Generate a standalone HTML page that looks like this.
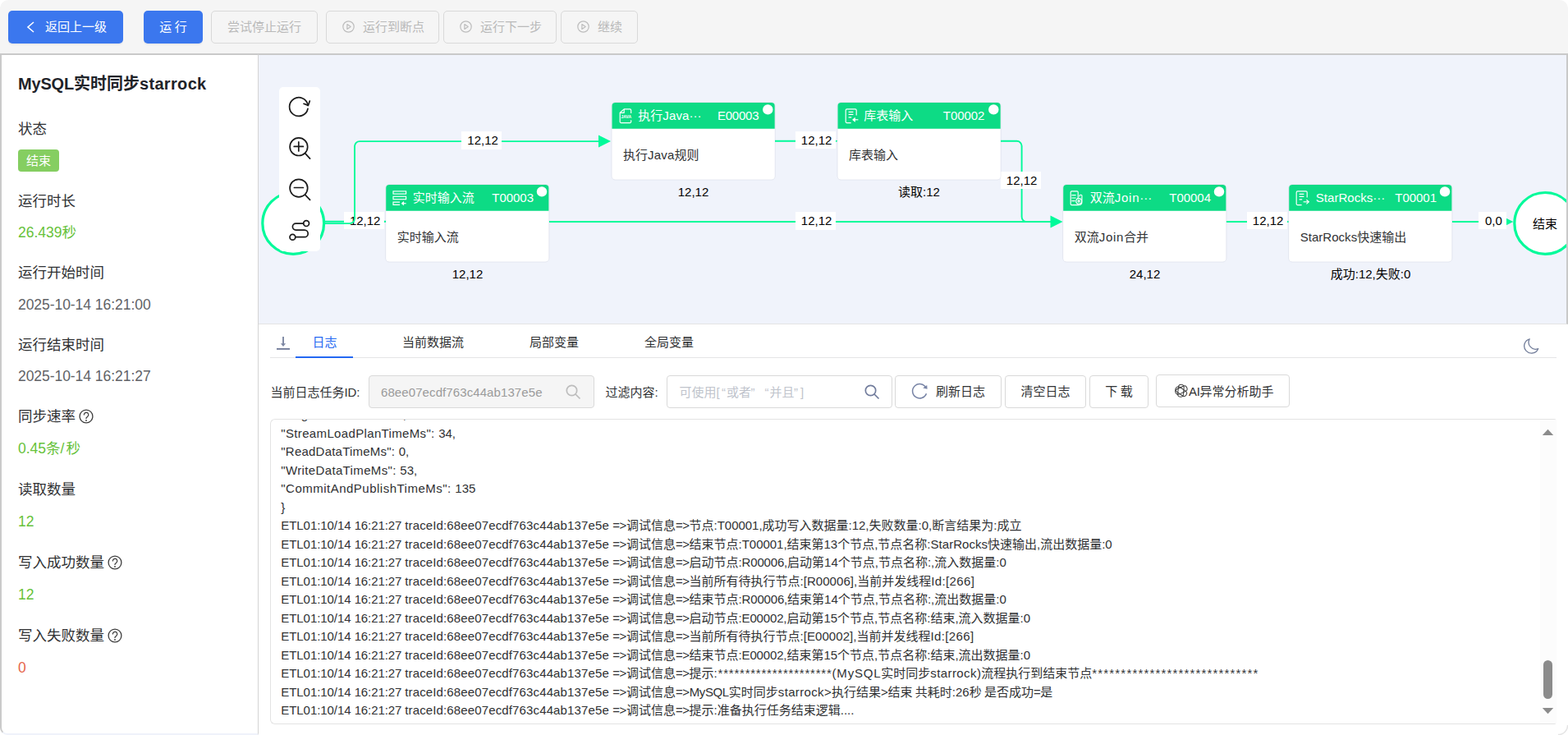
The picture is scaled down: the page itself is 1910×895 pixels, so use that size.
<!DOCTYPE html>
<html lang="zh-CN"><head>
<meta charset="utf-8">
<title>MySQL实时同步starrock</title>
<style>
*{box-sizing:border-box;margin:0;padding:0}
html,body{width:1910px;height:895px;overflow:hidden;background:#fff}
body{position:relative;font-family:"Liberation Sans","Noto Sans CJK SC",sans-serif;font-size:15px;color:#303133;-webkit-font-smoothing:antialiased}
.abs{position:absolute}
.t{position:absolute;white-space:nowrap;line-height:1}
/* top bar */
#topbar{position:absolute;left:0;top:0;width:1910px;height:65px;background:#f5f5f5;border-radius:10px 10px 0 0}
.btn{position:absolute;top:13px;height:40px;border-radius:5px;font-size:15px;line-height:38px;text-align:center;white-space:nowrap}
.btn.pri{background:#3b77ee;color:#fff;line-height:40px;box-shadow:0 2px 0 rgba(0,0,0,.04)}
.btn.dis{background:#f5f5f5;border:1px solid #d9d9d9;color:#b9b9b9}
/* frame */
#frame{position:absolute;left:0;top:65px;width:1910px;height:830px}
#left{position:absolute;left:0;top:65px;width:315px;height:830px;background:#fff;border-left:2px solid #cacaca;border-top:2px solid #c9c9c9;border-right:1px solid #d4d4d4;border-bottom:2px solid #eff2fa;border-radius:0 0 0 9px}
.lab{margin-top:1px;font-size:17.5px;color:#303133}
.val{margin-top:1px;font-size:17.5px;color:#606266}
.green{color:#67c23a}
.red{color:#e6654a}
/* canvas */
#canvas{position:absolute;left:315px;top:65px;width:1595px;height:330px;background:#f0f3fb;border-top:2px solid #c9c9c9;border-right:2px solid #c9c9c9;border-bottom:1px solid #e4e4e4;overflow:hidden}
.node{position:absolute;width:198.2px;height:93.6px}
.node .hd{position:absolute;left:0;top:0;width:198.2px;height:31.8px;color:#fff;font-size:15px}
.node .nm{position:absolute;left:13.5px;top:54.7px;font-size:15px;line-height:18px;color:#303133;white-space:nowrap}
.nlab{position:absolute;font-size:15px;line-height:18px;color:#000;text-align:center;white-space:nowrap;width:198px}
.elab{position:absolute;background:#fff}
.elt{position:absolute;font-size:15px;line-height:15px;color:#000;text-align:center;white-space:nowrap}
/* bottom */
.tab{position:absolute;top:407px;font-size:15px;line-height:20px;color:#303133;white-space:nowrap}
.ibox{position:absolute;top:457px;height:40px;border:1px solid #d9d9d9;border-radius:4px}
.obtn{position:absolute;top:457px;height:40px;border:1px solid #d9d9d9;border-radius:4px;background:#fff;font-size:15px;line-height:38px;color:#303133;text-align:center;white-space:nowrap}
#logbox{position:absolute;left:329px;top:510px;width:1567px;height:372px;border:1px solid #e3e3e3;border-right-color:#fcfcfc;border-radius:6px 3px 3px 6px;background:#fff;overflow:hidden}
#log{position:absolute;left:12.3px;top:-17px;font-size:15px;line-height:22.5px;color:#303133;white-space:pre}
</style>
</head>
<body>
<div id="topbar"></div>
<div class="btn pri" style="left:10px;width:140px">
  <svg class="abs" style="left:20px;top:12px" width="16" height="16" viewBox="0 0 16 16"><path d="M11 2 L4 8 L11 14" fill="none" stroke="#fff" stroke-width="1.6"></path></svg>
  <span class="abs" style="left:45px;top:0">返回上一级</span>
</div>
<div class="btn pri" style="left:175px;width:72px">运<span style="letter-spacing: -0.807px;"> </span>行</div>
<div class="btn dis" style="left:257px;width:130px">尝试停止运行</div>
<div class="btn dis" style="left:397px;width:138px"><svg class="abs" style="left:18px;top:10px" width="17" height="17" viewBox="0 0 17 17" fill="none" stroke="#bdbdbd" stroke-width="1.2"><circle cx="8.5" cy="8.5" r="6.7"></circle><path d="M6.9 5.6 L11.2 8.5 L6.9 11.4 Z" stroke-linejoin="round"></path></svg><span class="abs" style="left:44px;top:0">运行到断点</span></div>
<div class="btn dis" style="left:540px;width:138px"><svg class="abs" style="left:18px;top:10px" width="17" height="17" viewBox="0 0 17 17" fill="none" stroke="#bdbdbd" stroke-width="1.2"><circle cx="8.5" cy="8.5" r="6.7"></circle><path d="M6.9 5.6 L11.2 8.5 L6.9 11.4 Z" stroke-linejoin="round"></path></svg><span class="abs" style="left:44px;top:0">运行下一步</span></div>
<div class="btn dis" style="left:683px;width:94px"><svg class="abs" style="left:18px;top:10px" width="17" height="17" viewBox="0 0 17 17" fill="none" stroke="#bdbdbd" stroke-width="1.2"><circle cx="8.5" cy="8.5" r="6.7"></circle><path d="M6.9 5.6 L11.2 8.5 L6.9 11.4 Z" stroke-linejoin="round"></path></svg><span class="abs" style="left:44px;top:0">继续</span></div>

<div id="left"></div>
<div class="t" style="left:22px;top:92px;font-size:20px;font-weight:bold;color:#1f2329"><span style="letter-spacing: -0.183px;">MySQL</span>实时同步<span style="letter-spacing: 0.328px;">starrock</span></div>
<div class="t lab" style="left:22px;top:148px">状态</div>
<div class="abs" style="left:22px;top:182px;width:50px;height:27px;border-radius:4px;background:#85ce61;color:#fff;font-size:15px;line-height:27px;text-align:center">结束</div>
<div class="t lab" style="left:22px;top:236px">运行时长</div>
<div class="t val green" style="left:22px;top:274px"><span style="letter-spacing: -0.016px;">26.439</span>秒</div>
<div class="t lab" style="left:22px;top:323px">运行开始时间</div>
<div class="t val" style="left:22px;top:362px"><span style="letter-spacing: -0.056px;">2025-10-14 </span><span style="letter-spacing: -0.014px;">16:21:00</span></div>
<div class="t lab" style="left:22px;top:411px">运行结束时间</div>
<div class="t val" style="left:22px;top:449px"><span style="letter-spacing: -0.056px;">2025-10-14 </span><span style="letter-spacing: -0.014px;">16:21:27</span></div>
<div class="t lab" style="left:22px;top:498px">同步速率</div>
<div class="t val green" style="left:22px;top:537px"><span style="letter-spacing: -0.014px;">0.45</span>条<span style="letter-spacing: 1.998px;">/</span>秒</div>
<div class="t lab" style="left:22px;top:587px">读取数量</div>
<div class="t val green" style="left:22px;top:626px"><span style="letter-spacing: -0.02px;">12</span></div>
<div class="t lab" style="left:22px;top:676px">写入成功数量</div>
<div class="t val green" style="left:22px;top:715px"><span style="letter-spacing: -0.02px;">12</span></div>
<div class="t lab" style="left:22px;top:765px">写入失败数量</div>
<div class="t val red" style="left:22px;top:804px"><span style="letter-spacing: -0.02px;">0</span></div>
<svg class="abs" style="left:95.7px;top:497.5px" width="18" height="18" viewBox="0 0 18 18" fill="none" stroke="#3c3c3c" stroke-width="1.3"><circle cx="9" cy="9" r="7.9"></circle><path d="M6.4 7.5 A2.7 2.7 0 1 1 11 8.9 L9 11.1 V12" stroke-width="1.2"></path><circle cx="9" cy="14" r="0.9" fill="#3c3c3c" stroke="none"></circle></svg>
<svg class="abs" style="left:130.7px;top:675.6px" width="18" height="18" viewBox="0 0 18 18" fill="none" stroke="#3c3c3c" stroke-width="1.3"><circle cx="9" cy="9" r="7.9"></circle><path d="M6.4 7.5 A2.7 2.7 0 1 1 11 8.9 L9 11.1 V12" stroke-width="1.2"></path><circle cx="9" cy="14" r="0.9" fill="#3c3c3c" stroke="none"></circle></svg>
<svg class="abs" style="left:130.7px;top:764.6px" width="18" height="18" viewBox="0 0 18 18" fill="none" stroke="#3c3c3c" stroke-width="1.3"><circle cx="9" cy="9" r="7.9"></circle><path d="M6.4 7.5 A2.7 2.7 0 1 1 11 8.9 L9 11.1 V12" stroke-width="1.2"></path><circle cx="9" cy="14" r="0.9" fill="#3c3c3c" stroke="none"></circle></svg>
<div id="canvas">
<div class="abs" style="left:-315px;top:-67px;width:1910px;height:895px">
<svg class="abs" style="left:0;top:0" width="1910" height="895" viewBox="0 0 1910 895" fill="none" stroke="#00fa9a" stroke-width="1.9">
<circle cx="357.2" cy="271.9" r="37.4" fill="#fff" stroke-width="3.2"></circle>
<circle cx="1882.2" cy="271.9" r="37.4" fill="#fff" stroke-width="3.2"></circle>
<path d="M396 269.8 H470"></path><path d="M455 262.3 L470 269.8 L455 277.3 Z" fill="#00fa9a" stroke="none"></path>
</svg>
<div class="elab" style="left:418.8px;top:258.05px;width:49.2px;height:21.45px"></div><div class="elt" style="left:420.1px;top:261px;width:49.2px"><span style="letter-spacing: -0.013px;">12,12</span></div>
<svg class="abs" style="left:0;top:0" width="1910" height="895" viewBox="0 0 1910 895" fill="none" stroke="#00fa9a" stroke-width="1.9">
<path d="M396 272.1 H426 a6 6 0 0 0 6 -6 V178.1 a6 6 0 0 1 6 -6 H730"></path><path d="M729 164.6 L744 172.1 L729 179.6 Z" fill="#00fa9a" stroke="none"></path>
</svg>
<div class="elab" style="left:562.4px;top:160.15px;width:48.8px;height:21.45px"></div><div class="elt" style="left:563.7px;top:163px;width:48.8px"><span style="letter-spacing: -0.013px;">12,12</span></div>
<svg class="abs" style="left:0;top:0" width="1910" height="895" viewBox="0 0 1910 895" fill="none" stroke="#00fa9a" stroke-width="1.9">
<path d="M944 171.8 H1010"></path><path d="M1005.5 164.3 L1020.5 171.8 L1005.5 179.3 Z" fill="#00fa9a" stroke="none"></path>
<path d="M1219 171.8 H1238.6 a6 6 0 0 1 6 6 V264.1 a6 6 0 0 0 6 6 H1280"></path><path d="M1279.5 262.6 L1294.5 270.1 L1279.5 277.6 Z" fill="#00fa9a" stroke="none"></path>
<path d="M669 270 H1280"></path>
<path d="M1494 270 H1560"></path><path d="M1555.5 262.5 L1570.5 270 L1555.5 277.5 Z" fill="#00fa9a" stroke="none"></path>
<path d="M1769 270 H1830"></path><path d="M1828.3 262.5 L1843.3 270 L1828.3 277.5 Z" fill="#00fa9a" stroke="none"></path>
</svg>
<div class="elab" style="left:968.7px;top:160.05px;width:49.2px;height:21.45px"></div><div class="elt" style="left:970px;top:163px;width:49.2px"><span style="letter-spacing: -0.013px;">12,12</span></div>
<div class="elab" style="left:1218.7px;top:208.95px;width:49.2px;height:21.45px"></div><div class="elt" style="left:1220px;top:212px;width:49.2px"><span style="letter-spacing: -0.013px;">12,12</span></div>
<div class="elab" style="left:968.7px;top:258.15px;width:49.2px;height:21.45px"></div><div class="elt" style="left:970px;top:261px;width:49.2px"><span style="letter-spacing: -0.013px;">12,12</span></div>
<div class="elab" style="left:1518.7px;top:258.05px;width:49.2px;height:21.45px"></div><div class="elt" style="left:1520px;top:261px;width:49.2px"><span style="letter-spacing: -0.013px;">12,12</span></div>
<div class="elab" style="left:1801.1px;top:258.05px;width:34px;height:21.45px"></div><div class="elt" style="left:1802.4px;top:261px;width:34px"><span style="letter-spacing: -0.011px;">0,0</span></div>
<svg class="abs" style="left:0;top:0" width="1910" height="895" viewBox="0 0 1910 895"><rect x="469.9" y="224.7" width="198.8" height="94.2" rx="4.6" fill="none" stroke="rgba(60,60,90,0.07)" stroke-width="1.4"></rect><rect x="470.2" y="225" width="198.2" height="93.6" rx="4" fill="#fff"></rect><path d="M470.2 256.8 v-27.8 a4 4 0 0 1 4 -4 h190.2 a4 4 0 0 1 4 4 v27.8 z" fill="#0ddb85"></path><circle cx="660" cy="233.4" r="6.2" fill="#fff"></circle></svg><div class="node" style="left:470.2px;top:225px"><div class="hd"><svg class="abs" style="left:0;top:0" width="40" height="32" viewBox="0 0 40 32" fill="none" stroke="#fff" stroke-width="1.15">
<rect x="9" y="7.9" width="15.6" height="3.2"></rect><rect x="9" y="14.3" width="15.6" height="3.4"></rect><path d="M17 21.1 H9 V24.4 H17"></path><path d="M24.6 22.7 H19.6"></path><path d="M21.6 20.6 L19.2 22.7 L21.6 24.8 Z" fill="#fff" stroke-width="0.8"></path></svg><span class="t" style="left:32.6px;top:8px">实时输入流</span><span class="t" style="right:18.4px;top:8px"><span style="letter-spacing: -0.044px;">T00003</span></span></div><div class="nm">实时输入流</div></div>
<svg class="abs" style="left:0;top:0" width="1910" height="895" viewBox="0 0 1910 895"><rect x="745.2" y="124.7" width="198.8" height="94.2" rx="4.6" fill="none" stroke="rgba(60,60,90,0.07)" stroke-width="1.4"></rect><rect x="745.5" y="125" width="198.2" height="93.6" rx="4" fill="#fff"></rect><path d="M745.5 156.8 v-27.8 a4 4 0 0 1 4 -4 h190.2 a4 4 0 0 1 4 4 v27.8 z" fill="#0ddb85"></path><circle cx="935.3" cy="133.4" r="6.2" fill="#fff"></circle></svg><div class="node" style="left:745.5px;top:125px"><div class="hd"><svg class="abs" style="left:0;top:0" width="40" height="32" viewBox="0 0 40 32" fill="none" stroke="#fff" stroke-width="1.15" stroke-linejoin="round">
<path d="M22.7 13 V9.3 a1.4 1.4 0 0 0 -1.4 -1.4 H14.2 L9.2 12.3 V23.2 a1.4 1.4 0 0 0 1.4 1.4 H21.3 a1.4 1.4 0 0 0 1.4 -1.4 V21.2"></path><path d="M14.2 7.9 V12.3 H9.2"></path>
<text x="10.6" y="19.3" font-family="Liberation Sans, sans-serif" font-size="5.2" font-weight="bold" fill="#fff" stroke="none" textLength="12.6" lengthAdjust="spacingAndGlyphs">JAVA</text></svg><span class="t" style="left:31.7px;top:8px">执行<span style="letter-spacing: 0.179px;">Java</span>···</span><span class="t" style="right:19.3px;top:8px"><span style="letter-spacing: -0.209px;">E00003</span></span></div><div class="nm">执行<span style="letter-spacing: 0.179px;">Java</span>规则</div></div>
<svg class="abs" style="left:0;top:0" width="1910" height="895" viewBox="0 0 1910 895"><rect x="1020.2" y="124.7" width="198.8" height="94.2" rx="4.6" fill="none" stroke="rgba(60,60,90,0.07)" stroke-width="1.4"></rect><rect x="1020.5" y="125" width="198.2" height="93.6" rx="4" fill="#fff"></rect><path d="M1020.5 156.8 v-27.8 a4 4 0 0 1 4 -4 h190.2 a4 4 0 0 1 4 4 v27.8 z" fill="#0ddb85"></path><circle cx="1210.3" cy="133.4" r="6.2" fill="#fff"></circle></svg><div class="node" style="left:1020.5px;top:125px"><div class="hd"><svg class="abs" style="left:0;top:0" width="40" height="32" viewBox="0 0 40 32" fill="none" stroke="#fff" stroke-width="1.15">
<path d="M22.2 15.4 V9.3 a1.4 1.4 0 0 0 -1.4 -1.4 H10.6 a1.4 1.4 0 0 0 -1.4 1.4 V23.2 a1.4 1.4 0 0 0 1.4 1.4 H15.6"></path>
<path d="M12.6 11.3 H18.4 M12.6 14.4 H18.4 M12.6 17.9 H16.2" stroke-width="1.3"></path><path d="M18.2 20.8 H24.4"></path><path d="M20.4 18.4 L17.6 20.8 L20.4 23.2 Z" fill="#fff" stroke-width="0.8"></path></svg><span class="t" style="left:31.7px;top:8px">库表输入</span><span class="t" style="right:19.3px;top:8px"><span style="letter-spacing: -0.044px;">T00002</span></span></div><div class="nm">库表输入</div></div>
<svg class="abs" style="left:0;top:0" width="1910" height="895" viewBox="0 0 1910 895"><rect x="1294.9" y="224.7" width="198.8" height="94.2" rx="4.6" fill="none" stroke="rgba(60,60,90,0.07)" stroke-width="1.4"></rect><rect x="1295.2" y="225" width="198.2" height="93.6" rx="4" fill="#fff"></rect><path d="M1295.2 256.8 v-27.8 a4 4 0 0 1 4 -4 h190.2 a4 4 0 0 1 4 4 v27.8 z" fill="#0ddb85"></path><circle cx="1485" cy="233.4" r="6.2" fill="#fff"></circle></svg><div class="node" style="left:1295.2px;top:225px"><div class="hd"><svg class="abs" style="left:0;top:0" width="40" height="32" viewBox="0 0 40 32" fill="none" stroke="#fff" stroke-width="1.15">
<path d="M18.2 17 V9.1 a1.2 1.2 0 0 0 -1.2 -1.2 H10.4 a1.2 1.2 0 0 0 -1.2 1.2 V23.4 a1.2 1.2 0 0 0 1.2 1.2 H19.5"></path>
<path d="M20 14.6 V13.2 a1 1 0 0 1 1 -1 H21.9 a1 1 0 0 1 1 1 V21 a3.6 3.6 0 0 1 -3.4 3.6"></path>
<path d="M10.4 12.6 H15.6 M10.4 16 H15.6 M10.4 19.6 H14.6" stroke-width="1.2"></path>
<circle cx="19.1" cy="19.9" r="3.3"></circle><path d="M17.3 19.9 H20.9 M19.1 18.1 V21.7" stroke-width="1.3"></path></svg><span class="t" style="left:32.6px;top:8px">双流<span style="letter-spacing: 0.718px;">Join</span>···</span><span class="t" style="right:18.4px;top:8px"><span style="letter-spacing: -0.044px;">T00004</span></span></div><div class="nm">双流<span style="letter-spacing: 0.718px;">Join</span>合并</div></div>
<svg class="abs" style="left:0;top:0" width="1910" height="895" viewBox="0 0 1910 895"><rect x="1569.9" y="224.7" width="198.8" height="94.2" rx="4.6" fill="none" stroke="rgba(60,60,90,0.07)" stroke-width="1.4"></rect><rect x="1570.2" y="225" width="198.2" height="93.6" rx="4" fill="#fff"></rect><path d="M1570.2 256.8 v-27.8 a4 4 0 0 1 4 -4 h190.2 a4 4 0 0 1 4 4 v27.8 z" fill="#0ddb85"></path><circle cx="1760" cy="233.4" r="6.2" fill="#fff"></circle></svg><div class="node" style="left:1570.2px;top:225px"><div class="hd"><svg class="abs" style="left:0;top:0" width="40" height="32" viewBox="0 0 40 32" fill="none" stroke="#fff" stroke-width="1.15">
<path d="M22.2 15.4 V9.3 a1.4 1.4 0 0 0 -1.4 -1.4 H10.6 a1.4 1.4 0 0 0 -1.4 1.4 V23.2 a1.4 1.4 0 0 0 1.4 1.4 H15.6"></path>
<path d="M12.6 11.3 H18.4 M12.6 14.4 H18.4 M12.6 17.9 H16.2" stroke-width="1.3"></path><path d="M17.6 20.8 H23.8"></path><path d="M21.4 18.2 L24.3 20.8 L21.4 23.4"></path></svg><span class="t" style="left:32.6px;top:8px"><span style="letter-spacing: 0.035px;">StarRocks</span>···</span><span class="t" style="right:18.4px;top:8px"><span style="letter-spacing: -0.044px;">T00001</span></span></div><div class="nm"><span style="letter-spacing: 0.035px;">StarRocks</span>快速输出</div></div>
<div class="nlab" style="left:470.5px;top:324.5px"><span style="letter-spacing: -0.013px;">12,12</span></div>
<div class="nlab" style="left:745.5px;top:224.5px"><span style="letter-spacing: -0.013px;">12,12</span></div>
<div class="nlab" style="left:1020.5px;top:224.5px">读取<span style="letter-spacing: -0.011px;">:12</span></div>
<div class="nlab" style="left:1295.5px;top:324.5px"><span style="letter-spacing: -0.013px;">24,12</span></div>
<div class="nlab" style="left:1570.5px;top:324.5px">成功<span style="letter-spacing: -0.007px;">:12,</span>失败<span style="letter-spacing: -0.007px;">:0</span></div>
<div class="t" style="left:1867px;top:265px;font-size:15px;color:#000">结束</div>
<div class="abs" id="tools" style="left:340px;top:105.5px;width:50px;height:200.5px;background:#fff;border-radius:5px"></div>
<svg class="abs" style="left:0;top:0" width="1910" height="895" viewBox="0 0 1910 895" fill="none" stroke="#1a1a1a" stroke-width="1.7" stroke-linecap="round" stroke-linejoin="round">
  <path d="M374.95 132.45 A11.3 11.3 0 1 1 375.06 128.33"></path>
  <path d="M370 126.3 L375.4 128.4 L377.3 123"></path>
  <circle cx="363.9" cy="178.7" r="10.8"></circle>
  <path d="M358.2 178.4 H369.4 M363.8 172.9 V184"></path>
  <path d="M371.8 186.9 L377.6 193.2"></path>
  <circle cx="363.9" cy="229.1" r="10.8"></circle>
  <path d="M358.4 228.5 H369.4"></path>
  <path d="M371.8 237.3 L377.6 243.4"></path>
  <circle cx="373.1" cy="272.1" r="3.4"></circle>
  <circle cx="356.4" cy="288.7" r="3.4"></circle>
  <path d="M369.6 272.1 H360.4 a4 4 0 0 0 0 8 H370.9 a4.3 4.3 0 0 1 0 8.6 H359.9"></path>
</svg>
</div>
</div>
<div class="abs" style="left:329px;top:435px;width:1567px;height:1px;background:#e4e4e6"></div>
<div class="abs" style="left:360px;top:434px;width:70px;height:2px;background:#2468f2"></div>
<svg class="abs" style="left:336px;top:408px" width="18" height="20" viewBox="0 0 18 20"><path d="M9 2 V11.2" stroke="#7d87a3" stroke-width="1.9" fill="none"></path><path d="M5.9 10.2 H12.1 L9 14 Z" fill="#7d87a3"></path><path d="M1 16.9 H17" stroke="#737d9a" stroke-width="1.9"></path></svg>
<div class="tab" style="left:380.5px;color:#2468f2">日志</div>
<div class="tab" style="left:490px">当前数据流</div>
<div class="tab" style="left:645px">局部变量</div>
<div class="tab" style="left:785px">全局变量</div>
<svg class="abs" style="left:1855px;top:411px" width="20" height="20" viewBox="0 0 20 20"><path d="M8.2 1.8 A8.8 8.8 0 1 0 18.7 13.5 A8.3 8.3 0 0 1 8.2 1.8 Z" fill="none" stroke="#727d9a" stroke-width="1.3" stroke-linejoin="round"></path></svg>

<div class="t" style="left:329.5px;top:470px;font-size:15px;color:#303133">当前日志任务<span style="letter-spacing: -0.094px;">ID:</span></div>
<div class="ibox" style="left:449px;width:275px;background:#f5f5f5"><span class="t" style="left:14px;top:12px;font-size:15px;color:#9b9b9b"><span style="letter-spacing: 0.094px;">68ee07ecdf763c44ab137e5e</span></span>
<svg class="abs" style="left:238px;top:9px" width="20" height="20" viewBox="0 0 20 20" fill="none" stroke="#bdbdbd" stroke-width="1.7"><circle cx="8.5" cy="8.5" r="6.2"></circle><path d="M13 13 L18.5 18.5"></path></svg></div>
<div class="t" style="left:737.5px;top:470px;font-size:15px;color:#303133">过滤内容:</div>
<div class="ibox" style="left:812px;width:275px;background:#fff"><span class="t" style="left:14.5px;top:12px;font-size:15px;color:#c0c4cc">可使用<span style="margin-right:0.9px">[</span><span style="margin:0 1.2px 0 1.3px">“</span>或者<span style="margin:0 3px 0 -0.5px">”</span><span style="margin:0 1px 0 9px">“</span>并且<span style="margin:0 3px 0 -0.5px">”</span>]</span>
<svg class="abs" style="left:238.8px;top:9px" width="20" height="20" viewBox="0 0 20 20" fill="none" stroke="#717c9c" stroke-width="1.7"><circle cx="8.5" cy="8.5" r="6.2"></circle><path d="M13 13 L18.5 18.5"></path></svg></div>
<div class="obtn" style="left:1090px;width:130px"><span class="abs" style="left:49px;top:0">刷新日志</span></div>
<svg class="abs" style="left:1105px;top:461px" width="30" height="30" viewBox="1105 461 30 30"><path d="M1128.48 479.18 A8.7 8.7 0 1 1 1128.0 472.2" fill="none" stroke="#7884a6" stroke-width="1.5"></path><path d="M1124.2 472.6 L1129.2 469 L1129.6 473.8 Z" fill="#7884a6"></path></svg>
<div class="obtn" style="left:1224px;width:99px">清空日志</div>
<div class="obtn" style="left:1327px;width:72px">下<span style="letter-spacing: -0.807px;"> </span>载</div>
<div class="obtn" style="left:1408px;top:456px;width:163px;line-height:40px"><span class="abs" style="left:39px;top:0"><span style="letter-spacing: -0.329px;">AI</span>异常分析助手</span></div>
<svg class="abs" style="left:1429px;top:466px" width="20" height="20" viewBox="-10 -10 20 20" fill="none" stroke="#3c3c3c" stroke-width="1.0"><g transform="translate(0.3,-0.1)"><rect x="-7.5" y="-3.4" width="15" height="6.8" rx="3.4" transform="rotate(35) translate(0,0.9)"></rect><rect x="-7.5" y="-3.4" width="15" height="6.8" rx="3.4" transform="rotate(95) translate(0,0.9)"></rect><rect x="-7.5" y="-3.4" width="15" height="6.8" rx="3.4" transform="rotate(155) translate(0,0.9)"></rect></g></svg>
<div id="logbox"><div id="log"><div class="ln"><span style="letter-spacing: 0.278px;">"BeginTxnTimeMs": </span><span style="letter-spacing: -0.007px;">0,</span></div><div class="ln"><span style="letter-spacing: 0.348px;">"StreamLoadPlanTimeMs": </span><span style="letter-spacing: -0.011px;">34,</span></div><div class="ln"><span style="letter-spacing: 0.223px;">"ReadDataTimeMs": </span><span style="letter-spacing: -0.007px;">0,</span></div><div class="ln"><span style="letter-spacing: 0.359px;">"WriteDataTimeMs": </span><span style="letter-spacing: -0.011px;">53,</span></div><div class="ln"><span style="letter-spacing: 0.489px;">"CommitAndPublishTimeMs": </span><span style="letter-spacing: -0.017px;">135</span></div><div class="ln"><span style="letter-spacing: 0.06px;">}</span></div><div class="ln"><span style="letter-spacing: -0.062px;">ETL01:10/14 </span><span style="letter-spacing: -0.101px;">16:21:27 </span><span style="letter-spacing: 0.133px;">traceId:68ee07ecdf763c44ab137e5e </span><span style="letter-spacing: -0.435px;">=&gt;</span>调试信息<span style="letter-spacing: -0.435px;">=&gt;</span>节点<span style="letter-spacing: -0.032px;">:T00001,</span>成功写入数据量<span style="letter-spacing: -0.007px;">:12,</span>失败数量<span style="letter-spacing: -0.004px;">:0,</span>断言结果为:成立</div><div class="ln"><span style="letter-spacing: -0.062px;">ETL01:10/14 </span><span style="letter-spacing: -0.101px;">16:21:27 </span><span style="letter-spacing: 0.133px;">traceId:68ee07ecdf763c44ab137e5e </span><span style="letter-spacing: -0.435px;">=&gt;</span>调试信息<span style="letter-spacing: -0.435px;">=&gt;</span>结束节点<span style="letter-spacing: -0.032px;">:T00001,</span>结束第<span style="letter-spacing: -0.017px;">13</span>个节点,节点名称<span style="letter-spacing: 0.031px;">:StarRocks</span>快速输出,流出数据量<span style="letter-spacing: -0.007px;">:0</span></div><div class="ln"><span style="letter-spacing: -0.062px;">ETL01:10/14 </span><span style="letter-spacing: -0.101px;">16:21:27 </span><span style="letter-spacing: 0.133px;">traceId:68ee07ecdf763c44ab137e5e </span><span style="letter-spacing: -0.435px;">=&gt;</span>调试信息<span style="letter-spacing: -0.435px;">=&gt;</span>启动节点<span style="letter-spacing: -0.174px;">:R00006,</span>启动第<span style="letter-spacing: -0.017px;">14</span>个节点,节点名称:,流入数据量<span style="letter-spacing: -0.007px;">:0</span></div><div class="ln"><span style="letter-spacing: -0.062px;">ETL01:10/14 </span><span style="letter-spacing: -0.101px;">16:21:27 </span><span style="letter-spacing: 0.133px;">traceId:68ee07ecdf763c44ab137e5e </span><span style="letter-spacing: -0.435px;">=&gt;</span>调试信息<span style="letter-spacing: -0.435px;">=&gt;</span>当前所有待执行节点<span style="letter-spacing: 0.042px;">:[R00006],</span>当前并发线程<span style="letter-spacing: 0.368px;">Id:[266]</span></div><div class="ln"><span style="letter-spacing: -0.062px;">ETL01:10/14 </span><span style="letter-spacing: -0.101px;">16:21:27 </span><span style="letter-spacing: 0.133px;">traceId:68ee07ecdf763c44ab137e5e </span><span style="letter-spacing: -0.435px;">=&gt;</span>调试信息<span style="letter-spacing: -0.435px;">=&gt;</span>结束节点<span style="letter-spacing: -0.174px;">:R00006,</span>结束第<span style="letter-spacing: -0.017px;">14</span>个节点,节点名称:,流出数据量<span style="letter-spacing: -0.007px;">:0</span></div><div class="ln"><span style="letter-spacing: -0.062px;">ETL01:10/14 </span><span style="letter-spacing: -0.101px;">16:21:27 </span><span style="letter-spacing: 0.133px;">traceId:68ee07ecdf763c44ab137e5e </span><span style="letter-spacing: -0.435px;">=&gt;</span>调试信息<span style="letter-spacing: -0.435px;">=&gt;</span>启动节点<span style="letter-spacing: -0.156px;">:E00002,</span>启动第<span style="letter-spacing: -0.017px;">15</span>个节点,节点名称:结束,流入数据量<span style="letter-spacing: -0.007px;">:0</span></div><div class="ln"><span style="letter-spacing: -0.062px;">ETL01:10/14 </span><span style="letter-spacing: -0.101px;">16:21:27 </span><span style="letter-spacing: 0.133px;">traceId:68ee07ecdf763c44ab137e5e </span><span style="letter-spacing: -0.435px;">=&gt;</span>调试信息<span style="letter-spacing: -0.435px;">=&gt;</span>当前所有待执行节点<span style="letter-spacing: 0.055px;">:[E00002],</span>当前并发线程<span style="letter-spacing: 0.368px;">Id:[266]</span></div><div class="ln"><span style="letter-spacing: -0.062px;">ETL01:10/14 </span><span style="letter-spacing: -0.101px;">16:21:27 </span><span style="letter-spacing: 0.133px;">traceId:68ee07ecdf763c44ab137e5e </span><span style="letter-spacing: -0.435px;">=&gt;</span>调试信息<span style="letter-spacing: -0.435px;">=&gt;</span>结束节点<span style="letter-spacing: -0.156px;">:E00002,</span>结束第<span style="letter-spacing: -0.017px;">15</span>个节点,节点名称:结束,流出数据量<span style="letter-spacing: -0.007px;">:0</span></div><div class="ln"><span style="letter-spacing: -0.062px;">ETL01:10/14 </span><span style="letter-spacing: -0.101px;">16:21:27 </span><span style="letter-spacing: 0.133px;">traceId:68ee07ecdf763c44ab137e5e </span><span style="letter-spacing: -0.435px;">=&gt;</span>调试信息<span style="letter-spacing: -0.435px;">=&gt;</span>提示<span style="letter-spacing: 0.785px;">:*********************(MySQL</span>实时同步<span style="letter-spacing: 0.406px;">starrock)</span>流程执行到结束节点<span style="letter-spacing: 1.168px;">*****************************</span></div><div class="ln"><span style="letter-spacing: -0.062px;">ETL01:10/14 </span><span style="letter-spacing: -0.101px;">16:21:27 </span><span style="letter-spacing: 0.133px;">traceId:68ee07ecdf763c44ab137e5e </span><span style="letter-spacing: -0.435px;">=&gt;</span>调试信息<span style="letter-spacing: -0.381px;">=&gt;MySQL</span>实时同步<span style="letter-spacing: 0.35px;">starrock&gt;</span>执行结果<span style="letter-spacing: -0.435px;">&gt;</span>结束<span style="letter-spacing: -0.807px;"> </span>共耗时<span style="letter-spacing: -0.011px;">:26</span>秒<span style="letter-spacing: -0.807px;"> </span>是否成功<span style="letter-spacing: -0.435px;">=</span>是</div><div class="ln"><span style="letter-spacing: -0.062px;">ETL01:10/14 </span><span style="letter-spacing: -0.101px;">16:21:27 </span><span style="letter-spacing: 0.133px;">traceId:68ee07ecdf763c44ab137e5e </span><span style="letter-spacing: -0.435px;">=&gt;</span>调试信息<span style="letter-spacing: -0.435px;">=&gt;</span>提示:准备执行任务结束逻辑....</div></div>
<div class="abs" style="left:1546px;top:0;width:20px;height:370px;background:#fcfcfc"></div>
<div class="abs" style="left:1550px;top:293px;width:11px;height:47px;border-radius:5.5px;background:#8b8b8b"></div>
<svg class="abs" style="left:1548px;top:11px" width="16" height="9" viewBox="0 0 16 9"><path d="M0.8 8 L7.5 0.8 L14.2 8 Z" fill="#8b8b8b"></path></svg>
<svg class="abs" style="left:1548px;top:350px" width="16" height="9" viewBox="0 0 16 9"><path d="M0.8 0.9 L7.5 8.2 L14.2 0.9 Z" fill="#8b8b8b"></path></svg>
</div>
<svg class="abs" style="left:1890px;top:875px" width="20" height="20" viewBox="0 0 20 20"><path d="M19.6 8 A11.6 11.6 0 0 1 8 19.6" fill="none" stroke="#e4e4e4" stroke-width="1.6"></path></svg>


</body></html>
